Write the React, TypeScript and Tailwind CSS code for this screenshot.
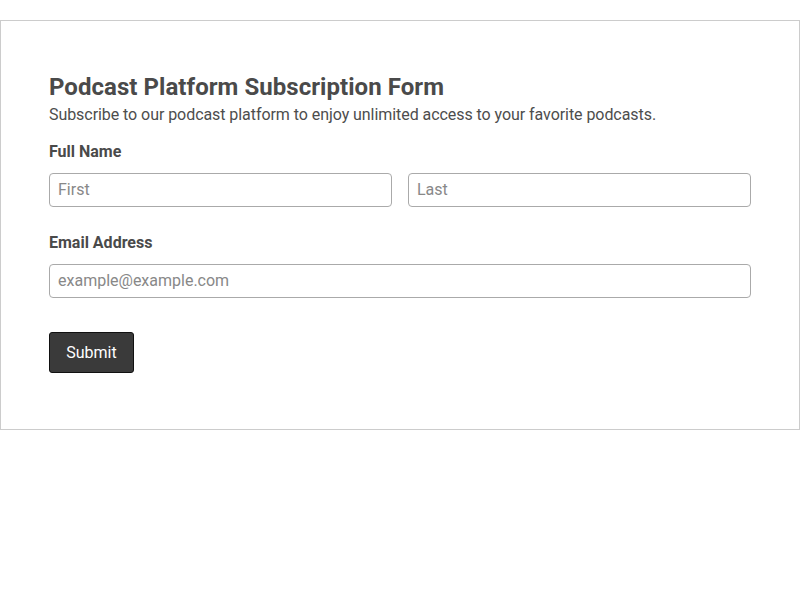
export default function App() {
  return (
    <div className="pt-5 bg-white" style={{ fontFamily: 'Roboto, "Noto Sans", sans-serif' }}>
      <div className="border border-[#cccccc] px-12 pt-[51px] pb-[56px] text-[#4a4a4a]">
        <h1 className="text-[24px] leading-[31px] font-bold tracking-[0.05px]">Podcast Platform Subscription Form</h1>
        <p className="text-[16px] leading-[24px] tracking-[-0.06px] text-[#4d4d4d]">
          Subscribe to our podcast platform to enjoy unlimited access to your favorite podcasts.
        </p>

        <form className="mt-[13px]" onSubmit={(e) => e.preventDefault()}>
          <label className="block text-[16px] leading-[24px] font-bold mb-[9px]">Full Name</label>
          <div className="grid grid-cols-2 gap-4">
            <input
              type="text"
              placeholder="First"
              className="h-[34px] px-2 pb-[2px] text-[16px] border border-[#aaaaaa] rounded-[4px] placeholder:text-[#888888] text-[#333333] outline-none"
            />
            <input
              type="text"
              placeholder="Last"
              className="h-[34px] px-2 pb-[2px] text-[16px] border border-[#aaaaaa] rounded-[4px] placeholder:text-[#888888] text-[#333333] outline-none"
            />
          </div>

          <label className="block mt-[24px] text-[16px] leading-[24px] font-bold mb-[9px]">Email Address</label>
          <input
            type="email"
            placeholder="example@example.com"
            className="w-full h-[34px] px-2 pb-[2px] text-[16px] border border-[#aaaaaa] rounded-[4px] placeholder:text-[#888888] text-[#333333] outline-none"
          />

          <button
            type="submit"
            className="mt-[34px] h-[41px] w-[85px] bg-[#3a3a3a] text-white text-[16px] border border-[#111111] rounded-[3px]"
          >
            Submit
          </button>
        </form>
      </div>
    </div>
  )
}
